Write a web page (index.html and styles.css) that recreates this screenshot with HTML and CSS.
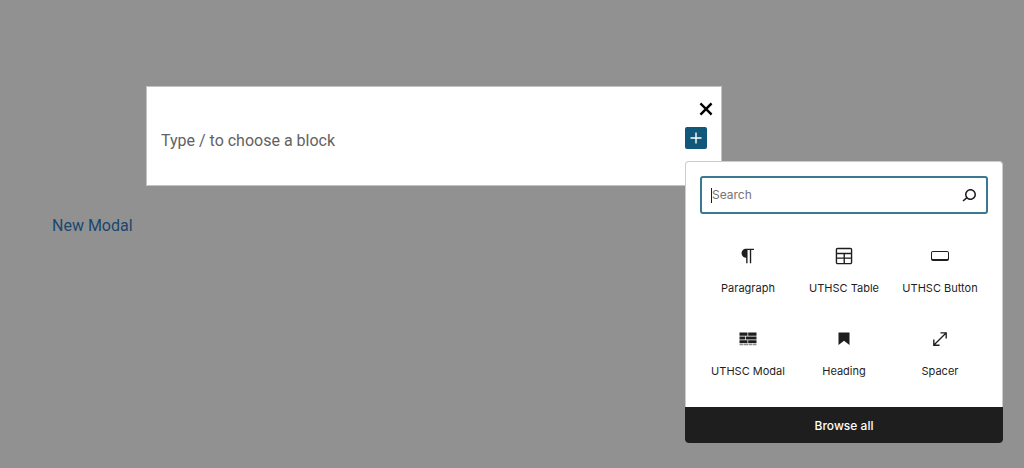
FILE: index.html
```html
<!DOCTYPE html>
<html lang="en">
<head>
    <meta charset="UTF-8">
    <meta name="viewport" content="width=device-width, initial-scale=1.0">
    <title>New Modal</title>
    <link rel="stylesheet" href="styles.css">
</head>
<body>
    <main class="editor">
        <section class="modal" aria-label="Modal content">
            <button class="modal-close" type="button" aria-label="Close">
                <svg viewBox="0 0 14 14" width="14" height="14"><path d="M2.300 2.300l9.400 9.400M11.700 2.300L2.300 11.700" stroke="currentColor" stroke-width="2.4" stroke-linecap="square"/></svg>
            </button>
            <div class="modal-row">
                <p class="placeholder">Type / to choose a block</p>
                <div class="appender">
                    <button class="add-block" type="button" aria-label="Add block">
                        <svg viewBox="0 0 22 22" width="22" height="22"><path d="M11 5.500v11M5.500 11h11" stroke="currentColor" stroke-width="1.400"/></svg>
                    </button>
                    <div class="inserter">
                        <div class="inserter-content">
                            <div class="search-box">
                                <input type="text" id="blockSearch" placeholder="Search" aria-label="Search" autofocus>
                                <label for="blockSearch" aria-label="Search for a block">
                                    <svg class="icon" viewBox="0 0 24 24"><path d="M13.5 6C10.5 6 8 8.500 8 11.500c0 1.100.300 2.100.900 3l-3.400 3 1 1.100 3.400-2.900c1 .9 2.200 1.400 3.600 1.400 3 0 5.500-2.500 5.500-5.500C19 8.500 16.500 6 13.500 6zm0 9.500c-2.200 0-4-1.800-4-4s1.800-4 4-4 4 1.800 4 4-1.800 4-4 4z"/></svg>
                                </label>
                            </div>
                            <div class="block-list">
                                <button class="block-item" type="button">
                                    <svg class="icon" viewBox="0 0 24 24"><path d="M10 14v6h1.500V5.500H14V20h1.500V5.500h3V4H10c-2.760 0-5 2.240-5 5s2.240 5 5 5z"/></svg>
                                    <span>Paragraph</span>
                                </button>
                                <button class="block-item" type="button">
                                    <svg class="icon" viewBox="0 0 24 24"><path d="M19 3H5c-1.100 0-2 .9-2 2v14c0 1.100.9 2 2 2h14c1.100 0 2-.9 2-2V5c0-1.100-.9-2-2-2zM5 4.500h14c.3 0 .5.2.5.5v3.500h-15V5c0-.3.2-.5.5-.5zm8 5.500h6.500v3.500H13V10zm-1.500 3.500h-7V10h7v3.500zm-7 5.500v-4h7v4.500H5c-.3 0-.5-.2-.5-.5zm14.500.5h-6V15h6.500v4c0 .3-.2.5-.5.5z"/></svg>
                                    <span>UTHSC Table</span>
                                </button>
                                <button class="block-item" type="button">
                                    <svg class="icon" viewBox="-1 -1 22 22"><path d="M17 5H3c-1.100 0-2 .9-2 2v6c0 1.100.9 2 2 2h14c1.100 0 2-.9 2-2V7c0-1.100-.9-2-2-2zm1 7c0 .6-.4 1-1 1H3c-.6 0-1-.4-1-1V7c0-.6.4-1 1-1h14c.6 0 1 .4 1 1v5z"/></svg>
                                    <span>UTHSC Button</span>
                                </button>
                                <button class="block-item" type="button">
                                    <svg class="icon" viewBox="0 0 22 22">
                                        <path d="M2.500 4.500h8v3.200h-8zM11.200 4.500h8.300v3.200h-8.300zM2.500 8.400h5.800v3.200H2.500zM9 8.400h10.500v3.200H9zM2.500 12.300h8v2.700h-8zM11.200 12.300h8.300v2.700h-8.300z"/>
                                        <path d="M2.500 15.500h4v1.800h-4zM7 15.500h4v1.800H7zM11.500 15.500h3.500v1.800h-3.500zM15.500 15.500h4v1.800h-4z" opacity="0.5"/>
                                    </svg>
                                    <span>UTHSC Modal</span>
                                </button>
                                <button class="block-item" type="button">
                                    <svg class="icon" viewBox="0 0 24 24"><path d="M6 5v13.600l6-4.800 6 4.800V5z"/></svg>
                                    <span>Heading</span>
                                </button>
                                <button class="block-item" type="button">
                                    <svg class="icon" viewBox="0 0 24 24"><path d="M7 18h4.500v1.500h-7v-7H6V17L17 6h-4.500V4.500h7v7H18V7L7 18z"/></svg>
                                    <span>Spacer</span>
                                </button>
                            </div>
                        </div>
                        <button class="browse-all" type="button">Browse all</button>
                    </div>
                </div>
            </div>
        </section>
        <a class="modal-link" href="#">New Modal</a>
    </main>
</body>
</html>
```
FILE: styles.css
```css
* {
    box-sizing: border-box;
}
body {
    margin: 0;
    background-color: #919191;
    color: #1e1e1e;
    font-family: Inter, "Liberation Sans", sans-serif;
}
button {
    border: 0;
    padding: 0;
    background: none;
    color: inherit;
    font: inherit;
    cursor: pointer;
}
svg {
    display: block;
}
.icon {
    width: 22px;
    height: 22px;
    fill: currentColor;
}
.editor {
    min-height: 100vh;
    padding: 86px 52px 0;
}
.modal {
    display: flex;
    flex-direction: column;
    margin: 0 250px 28px 94px;
    padding: 15px 14px 36px;
    border: 1px solid #c4c4c4;
    background-color: #fff;
}
.modal-close {
    align-self: flex-end;
    padding: 0 0 11px 8px;
    margin-right: -6px;
    color: #000;
}
.modal-row {
    display: flex;
    justify-content: space-between;
    height: 22px;
}
.placeholder {
    margin: 4px 0 0;
    font-family: Roboto, sans-serif;
    font-size: 16px;
    line-height: 20px;
    color: #626262;
}
.appender {
    position: relative;
}
.add-block {
    border-radius: 2px;
    background-color: #11577a;
    color: #fff;
}
.inserter {
    position: absolute;
    top: 34px;
    left: 0;
    width: 318px;
    border: 1px solid #ccc;
    border-bottom: 0;
    border-radius: 4px;
    background-color: #fff;
}
.inserter-content {
    padding: 14px 14px 12px;
}
.search-box {
    display: flex;
    align-items: center;
    height: 38px;
    padding: 0 5px 0 9px;
    border: 2px solid #3b7891;
    border-radius: 3px;
}
/* text cursor of the focused field */
.search-box::before {
    content: "";
    width: 1px;
    height: 15px;
    background-color: #1e1e1e;
}
.search-box input {
    flex: 1;
    min-width: 0;
    padding: 0;
    border: 0;
    outline: 0;
    background: none;
    color: #1e1e1e;
    caret-color: transparent;
    font: 12px/20px Inter, "Liberation Sans", sans-serif;
}
.search-box input::placeholder {
    color: #757575;
}
.search-box .icon {
    width: 24px;
    height: 24px;
}
.block-list {
    display: grid;
    grid-template-columns: repeat(3, 1fr);
    padding-top: 15px;
}
.block-item {
    display: flex;
    flex-direction: column;
    align-items: center;
    gap: 12px;
    padding: 16px 0 15px;
    font-size: 11px;
    line-height: 18px;
    white-space: nowrap;
}
.browse-all {
    display: block;
    width: calc(100% + 2px);
    height: 36px;
    margin: 0 -1px;
    border-radius: 0 0 4px 4px;
    background-color: #1e1e1e;
    color: #fff;
    font-size: 12px;
    font-weight: 500;
}
.modal-link {
    color: #1c466d;
    font-family: Roboto, sans-serif;
    font-size: 16px;
    line-height: 24px;
    text-decoration: none;
}
```
